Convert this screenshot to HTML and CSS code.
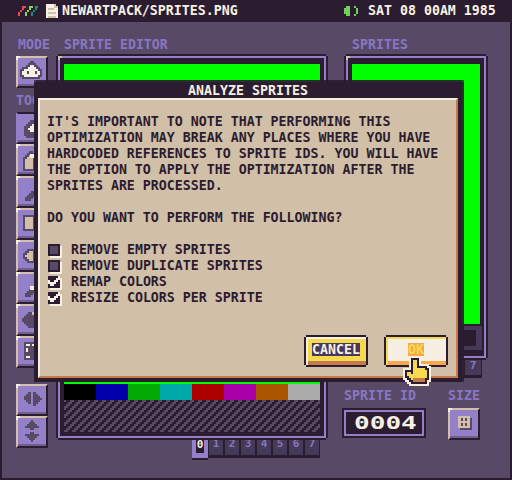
FILE: index.html
```html
<!DOCTYPE html>
<html lang="en">
<head>
<meta charset="utf-8">
<title>Sprites</title>
<link rel="stylesheet" href="styles.css">
</head>
<body>
<div class="desktop">
  <header class="topbar">
    <svg class="logo" width="20" height="10" viewBox="0 0 20 10"><path class="red" d="M4 0h4v2H6v2H4v2H2v4H0V6h2V4h2z"/><path class="grn" d="M11 0h4v2h-2v2h-2v2H9v4H7V6h2V4h2z"/><path class="teal" d="M17 0h3v2h-1v2h-2v2h-2v4h-2V6h2V4h2z"/></svg>
    <svg class="doc" width="12" height="14" viewBox="0 0 12 14"><path class="cream" d="M0 0h8v2h2v2h2v10H0z"/><path class="tanf" d="M2 4h6v2H2zM2 8h8v2H2zM2 12h8v2H2zM8 0h2v2h2v2H8z"/></svg>
    <span class="path">NEWARTPACK/SPRITES.PNG</span>
    <span class="clock">
      <svg class="speaker" width="14" height="10" viewBox="0 0 14 10"><path class="spk" d="M0 2h2V0h4v10H2V8H0zM10 0h2v2h2v6h-2v2h-2V8h2V2h-2z"/></svg>
      <span>SAT 08 00AM 1985</span>
    </span>
  </header>

  <main class="panel">
    <section class="col-tools">
      <div class="label">MODE</div>
      <div class="tool">
        <svg class="ico" viewBox="0 0 28 26"><path class="stroke-mid" d="M13 4h2v2h2v2h2v2h2v2h2v6h-2v2H5v-2H3v-6h2v-2h4V8h2V6h2z"/><path class="dot" d="M9 13h2v3H9zM17 13h2v3h-2z"/></svg>
      </div>
      <div class="label label-tools">TOOLS</div>
      <div class="tool-list">
        <div class="tool selected"><svg class="ico" viewBox="0 0 28 26"><path class="mid" d="M6 12h2v-2h2V8h2V6h4v18H8v-2H6z"/><path class="cream" d="M10 14h2v-2h2v-2h2v8h-4v-2h-2z"/></svg></div>
        <div class="tool"><svg class="ico" viewBox="0 0 28 26"><path class="stroke-dark" d="M6 12h2v-2h2V8h2V6h2v2h2v16H6z"/><path class="cream" d="M12 8h4v4h-4z"/></svg></div>
        <div class="tool"><svg class="ico" viewBox="0 0 28 26"><path class="stroke-tan" d="M8 20h2v-2h2v-2h2v-2h2v4h-2v2h-2v2H8z"/></svg></div>
        <div class="tool"><svg class="ico" viewBox="0 0 28 26"><path class="stroke-dark" d="M6 6h10v14H6z"/></svg></div>
        <div class="tool"><svg class="ico" viewBox="0 0 28 26"><path class="stroke-dark" d="M6 12h2v-2h2V8h6v12h-6v-2H8v-2H6z"/></svg></div>
        <div class="tool"><svg class="ico" viewBox="0 0 28 26"><path class="stroke-tan" d="M8 20h2v-2h2v-2h2v-2h2v4h-2v2h-2v2H8z"/><path class="cream" d="M12 12h4v4h-4z"/></svg></div>
        <div class="tool"><svg class="ico" viewBox="0 0 28 26"><path class="mid" d="M4 12h2v-2h2V8h2V6h6v16h-6v-2H8v-2H6v-2H4z"/><path class="tanf" d="M14 6h2v3h-2z"/></svg></div>
        <div class="tool"><svg class="ico" viewBox="0 0 28 26"><path class="mid" d="M6 4h10v18H6z"/><path class="cream" d="M8 6h4v2H8zM8 10h2v4H8zM8 18h4v2H8zM14 6h2v2h-2z"/></svg></div>
      </div>
      <div class="tool-list arrows">
        <div class="tool"><svg class="ico" viewBox="0 0 28 26"><path class="mid" d="M4 12h2v-2h2V8h2V6h3v12h-3v-2H8v-2H6v-2zM15 6h3v2h2v2h2v2h2v2h-2v2h-2v2h-2v2h-3z"/></svg></div>
        <div class="tool"><svg class="ico" viewBox="0 0 28 26"><path class="mid" d="M13 2h2v2h2v2h2v2h2v2h-5v2h-4v-2H7V8h2V6h2V4h2zM12 14h4v2h5v2h-2v2h-2v2h-2v2h-2v-2h-2v-2H9v-2H7v-2h5z"/></svg></div>
      </div>
    </section>

    <section class="col-editor">
      <div class="label">SPRITE EDITOR</div>
      <div class="frame">
        <div class="frame-line">
          <div class="canvas canvas-editor"></div>
          <div class="palette">
            <span class="sw c0"></span><span class="sw c1"></span><span class="sw c2"></span><span class="sw c3"></span>
            <span class="sw c4"></span><span class="sw c5"></span><span class="sw c6"></span><span class="sw c7"></span>
          </div>
          <svg class="dither" width="256" height="32"><defs><pattern id="hatch" width="8" height="8" patternUnits="userSpaceOnUse"><path class="mid" d="M6 0h2v2H6zM0 0h2v2H0zM4 2h4v2H4zM2 4h4v2H2zM0 6h4v2H0z"/></pattern></defs><rect width="256" height="32" fill="url(#hatch)"/></svg>
        </div>
      </div>
      <div class="tabs">
        <span class="tab on"><b>0</b></span><span class="tab">1</span><span class="tab">2</span><span class="tab">3</span><span class="tab">4</span><span class="tab">5</span><span class="tab">6</span><span class="tab">7</span>
      </div>
    </section>

    <section class="col-sprites">
      <div class="label">SPRITES</div>
      <div class="frame">
        <div class="frame-line">
          <div class="canvas canvas-sprites"></div>
          <div class="scroll-row"><span class="scroll-btn"><i></i></span></div>
        </div>
      </div>
      <div class="tabs tabs-right"><span class="tab">7</span></div>
      <div class="meta">
        <div class="meta-id">
          <div class="label label-id">SPRITE ID</div>
          <div class="idbox"><span class="idnum">0004</span></div>
        </div>
        <div class="meta-size">
          <div class="label label-id-size">SIZE</div>
          <div class="tool"><svg class="ico" viewBox="0 0 28 26"><path class="mid" d="M10 8h12v12H10z"/><path class="tanf" d="M8 6h12v12H8z"/><path class="mid" d="M11 8h2v3h-2zM15 8h2v3h-2zM11 13h2v3h-2zM15 13h2v3h-2z"/></svg></div>
        </div>
      </div>
    </section>
  </main>

  <div class="dialog">
    <h1 class="dialog-title">ANALYZE SPRITES</h1>
    <div class="dialog-body">
      <p class="msg">IT'S IMPORTANT TO NOTE THAT PERFORMING THIS<br>OPTIMIZATION MAY BREAK ANY PLACES WHERE YOU HAVE<br>HARDCODED REFERENCES TO SPRITE IDS. YOU WILL HAVE<br>THE OPTION TO APPLY THE OPTIMIZATION AFTER THE<br>SPRITES ARE PROCESSED.</p>
      <p class="msg question">DO YOU WANT TO PERFORM THE FOLLOWING?</p>
      <ul class="opts">
        <li class="opt"><span class="cb"></span>REMOVE EMPTY SPRITES</li>
        <li class="opt"><span class="cb"></span>REMOVE DUPLICATE SPRITES</li>
        <li class="opt"><span class="cb checked"><svg width="12" height="12" viewBox="0 0 12 12"><path class="cream" d="M0 4h2v4H0zM2 6h2v4H2zM4 6h2v4H4zM6 4h2v4H6zM8 2h2v4H8zM10 0h2v4h-2z"/></svg></span>REMAP COLORS</li>
        <li class="opt"><span class="cb checked"><svg width="12" height="12" viewBox="0 0 12 12"><path class="cream" d="M0 4h2v4H0zM2 6h2v4H2zM4 6h2v4H4zM6 4h2v4H6zM8 2h2v4H8zM10 0h2v4h-2z"/></svg></span>RESIZE COLORS PER SPRITE</li>
      </ul>
      <div class="actions">
        <div class="btn btn-cancel"><span>CANCEL</span></div>
        <div class="btn btn-ok"><span>OK</span></div>
      </div>
    </div>
  </div>

  <svg class="hand" width="32" height="32" viewBox="0 0 32 32">
    <path class="h-white" d="M12 4H16V12H24V14H26V22H24V26H12V24H10V22H8V20H6V16H10V18H12Z"/>
    <path class="h-dark" d="M12 4H16V12H24V14H26V22H24V26H12V24H10V22H8V20H6V16H10V18H12Z"/>
    <path class="h-yellow" d="M12 4H16V12H24V14H26V22H24V26H12V24H10V22H8V20H6V16H10V18H12Z"/>
    <path class="h-brown" d="M12 22H24V26H12z"/>
  </svg>
</div>
</body>
</html>
```
FILE: styles.css
```css
* { box-sizing: border-box; }
html, body { margin: 0; padding: 0; background: #2b1c30; }
body { width: 512px; height: 480px; overflow: hidden; font-family: "DejaVu Sans Mono", "Liberation Mono", monospace; font-weight: 700; font-size: 13.28px; line-height: 16px; }
svg { display: block; shape-rendering: crispEdges; }

.desktop { position: relative; width: 512px; height: 480px; display: flex; flex-direction: column; background: #2b1c30; }

.topbar { flex: none; height: 22px; display: flex; align-items: center; padding-left: 18px; color: #f6f0e4; }
.logo { margin-right: 8px; }
.doc { margin-right: 4px; }
.path { flex: 1; }
.clock { display: flex; align-items: center; width: 152px; margin-right: 16px; }
.speaker { margin-right: 10px; }
.red { fill: #e8465f; } .grn { fill: #7ed957; } .teal { fill: #1f8c8c; }
.spk { fill: #70d25a; }
.cream { fill: #f6f0e4; } .tanf { fill: #d1bfa7; } .mid { fill: #584a66; } .dot { fill: #584a66; }
.stroke-mid { fill: #f6f0e4; stroke: #584a66; stroke-width: 2; }
.stroke-dark { fill: #d1bfa7; stroke: #584a66; stroke-width: 2; }
.stroke-tan { fill: #d1bfa7; stroke: #584a66; stroke-width: 2; }

.panel { flex: 1; margin: 0 2px 2px; background: #584a66; display: flex; padding: 16px 0 0 14px; }
.label { height: 16px; line-height: 14px; color: #8876c4; white-space: nowrap; }

.col-tools { width: 32px; margin-right: 8px; display: flex; flex-direction: column; }
.col-tools > .label { margin-left: 2px; height: 18px; }
.col-tools > .label-tools { margin: 6px 0 0; height: 18px; }
.tool-list { display: flex; flex-direction: column; }
.arrows { margin-top: 16px; }

.tool { position: relative; flex: none; width: 32px; height: 32px; background: #9480c8; border: 2px solid; border-color: #d1bfa7 #2b1c30 #2b1c30 #d1bfa7; box-shadow: inset 0 -2px #6e5f8f; }
.tool::before { content: ""; position: absolute; left: -2px; top: -2px; width: 4px; height: 4px; background: linear-gradient(#f6f0e4, #f6f0e4) 0 0 / 4px 2px no-repeat, linear-gradient(#f6f0e4, #f6f0e4) 0 0 / 2px 4px no-repeat; }
.tool.selected { border-color: #2b1c30 #2b1c30 #2b1c30 #9480c8; box-shadow: inset 0 -2px #6e5f8f; }
.tool.selected::before { display: none; }
.ico { width: 28px; height: 26px; }

.col-editor { width: 272px; margin-right: 16px; display: flex; flex-direction: column; }
.col-editor > .label { padding-left: 8px; }
.col-sprites { width: 144px; display: flex; flex-direction: column; }
.col-sprites > .label { padding-left: 8px; }

.frame { position: relative; background: #2b1c30; padding: 2px; clip-path: polygon(2px 0, calc(100% - 2px) 0, calc(100% - 2px) 2px, 100% 2px, 100% calc(100% - 2px), calc(100% - 2px) calc(100% - 2px), calc(100% - 2px) 100%, 2px 100%, 2px calc(100% - 2px), 0 calc(100% - 2px), 0 2px, 2px 2px); }
.frame::before { content: ""; position: absolute; left: 2px; top: 2px; width: 4px; height: 4px; background: linear-gradient(#d1bfa7, #d1bfa7) 0 0 / 4px 2px no-repeat, linear-gradient(#d1bfa7, #d1bfa7) 0 0 / 2px 4px no-repeat; }
.frame-line { border: 2px solid #9480c8; background: #2b1c30; padding: 6px 4px 4px; }
.canvas { background: #00ff00; }
.canvas-editor { height: 320px; }
.canvas-sprites { height: 260px; }
.palette { display: flex; height: 16px; }
.sw { flex: 1; }
.c0 { background: #000000; } .c1 { background: #0000aa; } .c2 { background: #00aa00; } .c3 { background: #00aaaa; }
.c4 { background: #aa0000; } .c5 { background: #aa00aa; } .c6 { background: #aa5500; } .c7 { background: #aaaaaa; }

.scroll-row { height: 28px; display: flex; justify-content: flex-end; padding-top: 2px; }
.scroll-btn { width: 18px; height: 24px; margin-right: -2px; background: #47395a; padding: 4px 6px 4px 0; }
.scroll-btn i { display: block; height: 16px; background: #2b1c30; }

.tabs { display: flex; margin: -2px 0 0 136px; }
.tab { width: 16px; height: 20px; background: #463a59; border: solid #2b1c30; border-width: 0 1px 3px 1px; color: #8876c4; text-align: center; line-height: 12px; font-size: 11px; }
.tab.on { height: 22px; background: #9480c8; border-width: 0 0 2px 0; padding-top: 1px; }
.tab.on b { display: block; width: 8px; height: 14px; margin: 0 auto; background: #2b1c30; color: #f6f0e4; }
.tabs-right { margin: 0 0 0 120px; }
.tabs-right .tab { width: 18px; height: 18px; }

.meta { display: flex; margin: 11px 0 0 -2px; }
.meta-id { width: 106px; }
.meta-size { width: 32px; }
.label-id, .label-id-size { height: 19px; }
.label-id { padding-left: 2px; }
.idbox { width: 84px; height: 30px; border: 2px solid #2b1c30; background: #2b1c30; box-shadow: inset 0 0 0 2px #9480c8; display: flex; align-items: center; padding-left: 10px; color: #f6f0e4; }
.idnum { display: block; font-size: 17.4px; transform: scaleX(1.5); transform-origin: left center; }

.dialog { position: absolute; left: 34px; top: 82px; width: 428px; height: 300px; background: #2b1c30; box-shadow: 2px -2px 0 rgba(43, 28, 48, 0.7), 2px 0 0 rgba(43, 28, 48, 0.7), 0 -2px 0 rgba(43, 28, 48, 0.7); display: flex; flex-direction: column; }
.dialog-title { margin: 0; height: 16px; font: inherit; line-height: 18px; text-align: center; color: #f6f0e4; }
.dialog-body { flex: 1; margin: 0 4px 4px; background: #d1bfa7; color: #2b1c30; border: 2px solid; border-color: #f6f0e4 #c47a4a #c47a4a #f6f0e4; padding: 14px 7px 0; display: flex; flex-direction: column; }
.msg { margin: 0; white-space: nowrap; }
.question { margin-top: 16px; }
.opts { list-style: none; margin: 16px 0 0; padding: 0; }
.opt { display: flex; align-items: center; height: 16px; white-space: nowrap; }
.cb { flex: none; width: 12px; height: 12px; margin: 0 11px 0 1px; background: #584a66; border: 2px solid #2b1c30; box-shadow: 2px 2px 0 #f6f0e4; }
.cb.checked { background: #2b1c30; }
.cb svg { margin: -2px; overflow: visible; }

.actions { display: flex; justify-content: flex-end; gap: 16px; margin: 29px 1px 0 0; }
.btn { width: 64px; height: 32px; border: 2px solid #2b1c30; display: flex; align-items: center; justify-content: center; padding-bottom: 4px; clip-path: polygon(2px 0, 62px 0, 62px 2px, 64px 2px, 64px 30px, 62px 30px, 62px 32px, 2px 32px, 2px 30px, 0 30px, 0 2px, 2px 2px); }
.btn-cancel { background: #f7d94f; box-shadow: inset 2px 2px 0 #f6f0e4, inset 0 -4px 0 #c47a4a; }
.btn-cancel span { background: #47395a; color: #f6f0e4; height: 13px; line-height: 13px; }
.btn-ok { background: #f6f0e4; box-shadow: inset 2px 2px 0 #f7d94f, inset 0 -4px 0 #f8a84a; }
.btn-ok span { background: #f8a84a; color: #f7d94f; height: 13px; line-height: 13px; }

.hand { position: absolute; left: 401px; top: 356px; }
.h-white { fill: #f6f0e4; stroke: #f6f0e4; stroke-width: 8; }
.h-dark { fill: #2b1c30; stroke: #2b1c30; stroke-width: 4; }
.h-yellow { fill: #f7d94f; }
.h-brown { fill: #c47a4a; }
```
